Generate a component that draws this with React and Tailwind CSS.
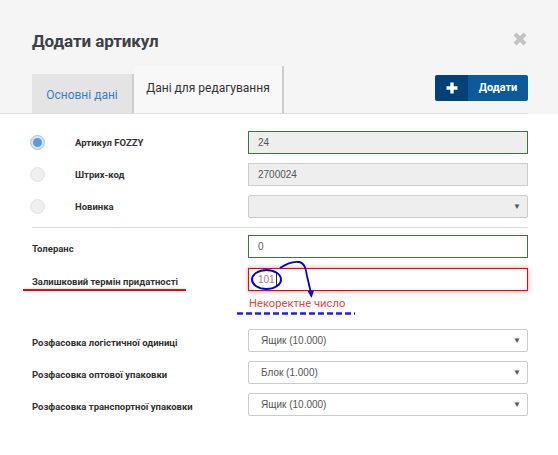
import React from "react";

const labelCls = "text-[9.5px] font-bold text-[#333] leading-none";
const inputBase =
  "w-[280px] h-[23px] flex items-center text-[10px] text-[#555] border box-border";
const valFont = { fontFamily: '"Liberation Sans", Arial, sans-serif' };

function Radio({ checked }) {
  if (checked)
    return (
      <div className="w-[15px] h-[15px] rounded-full bg-[#d6e6f7] border border-[#9fc2e6] flex items-center justify-center">
        <div className="w-[9px] h-[9px] rounded-full bg-[#5b9bd9]" />
      </div>
    );
  return <div className="w-[15px] h-[15px] rounded-full bg-[#efefef] border border-[#e3e3e3]" />;
}

function Arrow() {
  return <span className="ml-auto mr-[6px] text-[8px] text-[#555] leading-none">▼</span>;
}

export default function App() {
  return (
    <div
      className="relative w-[558px] h-[455px] bg-white overflow-hidden"
      style={{ fontFamily: 'Roboto, "Noto Sans", sans-serif' }}
    >
      {/* Header */}
      <div className="bg-[#f5f5f5]">
        <div className="flex justify-between pl-[32px] pr-[31px] pt-[30px] h-[67px] items-start">
          <div className="text-[17px] font-bold text-[#3d4147] leading-[22px] tracking-[-0.1px]">
            Додати артикул
          </div>
          <svg width="14" height="14" viewBox="0 0 14 14" className="mt-[2px]">
            <path d="M2 2 L12 12 M12 2 L2 12" stroke="#c2c2c2" strokeWidth="4" strokeLinecap="butt" />
          </svg>
        </div>
        <div className="flex items-end h-[47px] mr-[30px] border-b border-[#dcdcdc] pl-[32px]">
          <div className="h-[39px] w-[102px] bg-[#e4e4e4] border-r-2 border-[#cdcdcd] flex items-center justify-center pt-[3px] text-[12px] text-[#3a7fc1]">
            Основні дані
          </div>
          <div className="h-[47px] w-[150px] bg-[#f8f8f8] border-r-2 border-[#cdcdcd] flex items-center justify-center pb-[3px] text-[12px] text-[#333]">
            Дані для редагування
          </div>
          <div className="ml-auto self-start mt-[8px] flex h-[26px] rounded-[2px] overflow-hidden">
            <div className="w-[33px] bg-[#004177] flex items-center justify-center">
              <svg width="12" height="12" viewBox="0 0 12 12">
                <path d="M6 0.5 V11.5 M0.5 6 H11.5" stroke="#fff" strokeWidth="3.4" />
              </svg>
            </div>
            <div className="w-[60px] bg-[#0b5a9b] flex items-center justify-center text-[11px] font-bold text-white">
              Додати
            </div>
          </div>
        </div>
      </div>

      {/* Body */}
      <div className="pl-[32px] pt-[17px]">
        <div className="flex flex-col gap-[9px]">
          <div className="flex items-center h-[23px]">
            <div className="w-[216px] flex items-center">
              <div className="-ml-[2px]"><Radio checked /></div>
              <span className={labelCls + " ml-[30px]"}>Артикул FOZZY</span>
            </div>
            <div className={inputBase + " pl-[9px] bg-[#eeeeee] border-[#3c763d]"} style={valFont}>24</div>
          </div>
          <div className="flex items-center h-[23px]">
            <div className="w-[216px] flex items-center">
              <div className="-ml-[2px]"><Radio /></div>
              <span className={labelCls + " ml-[30px]"}>Штрих-код</span>
            </div>
            <div className={inputBase + " pl-[9px] bg-[#eeeeee] border-[#cccccc]"} style={valFont}>2700024</div>
          </div>
          <div className="flex items-center h-[23px]">
            <div className="w-[216px] flex items-center">
              <div className="-ml-[2px]"><Radio /></div>
              <span className={labelCls + " ml-[30px]"}>Новинка</span>
            </div>
            <div className={inputBase + " pl-[12px] bg-[#eeeeee] border-[#cccccc] rounded-[2px]"} style={valFont}><Arrow /></div>
          </div>
        </div>

        <div className="w-[496px] h-px bg-[#d9d9d9] mt-[9px] mb-[7px]" />

        <div className="flex items-center h-[23px]">
          <div className="w-[216px]"><span className={labelCls}>Толеранс</span></div>
          <div className={inputBase + " pl-[9px] bg-white border-[#3c763d]"} style={valFont}>0</div>
        </div>
        <div className="flex items-center h-[23px] mt-[10px]">
          <div className="w-[216px]"><span className={labelCls}>Залишковий термін придатності</span></div>
          <div
            className={inputBase + " pl-[9px] bg-white border-[#ff0000] shadow-[0_0_4px_rgba(255,0,0,0.45)] text-[#888]"}
            style={valFont}
          >
            101<span className="inline-block w-px h-[13px] bg-[#333] ml-[1px]" />
          </div>
        </div>
        <div className="pl-[217px] mt-[6px] text-[11.2px] leading-[14px] text-[#e8453c]">Некоректне число</div>

        <div className="flex flex-col gap-[9px] mt-[18px]">
          {[
            ["Розфасовка логістичної одиниці", "Ящик (10.000)"],
            ["Розфасовка оптової упаковки", "Блок (1.000)"],
            ["Розфасовка транспортної упаковки", "Ящик (10.000)"],
          ].map(([l, v]) => (
            <div key={l} className="flex items-center h-[23px]">
              <div className="w-[216px]"><span className={labelCls}>{l}</span></div>
              <div className={inputBase + " pl-[12px] bg-white border-[#cccccc] rounded-[2px]"} style={valFont}>
                {v}
                <Arrow />
              </div>
            </div>
          ))}
        </div>
      </div>

      {/* Annotations overlay */}
      <svg className="absolute left-0 top-0 pointer-events-none" width="558" height="455">
        <line x1="23" y1="290" x2="186" y2="290" stroke="#ff0000" strokeWidth="2" />
        <line x1="237" y1="313.5" x2="355" y2="313.5" stroke="#1a1aff" strokeWidth="2.5" strokeDasharray="6 3" />
        <ellipse cx="266.5" cy="279.5" rx="14.5" ry="9.5" fill="none" stroke="#0000ee" strokeWidth="2" />
        <path d="M280 268 C286 264 293 261 299 262 C305 263 306 270 307 276 L311 293" fill="none" stroke="#0000ee" strokeWidth="1.8" />
        <path d="M307.5 291 L311.5 298 L314 290.5 Z" fill="#0000ee" />
      </svg>
    </div>
  );
}
